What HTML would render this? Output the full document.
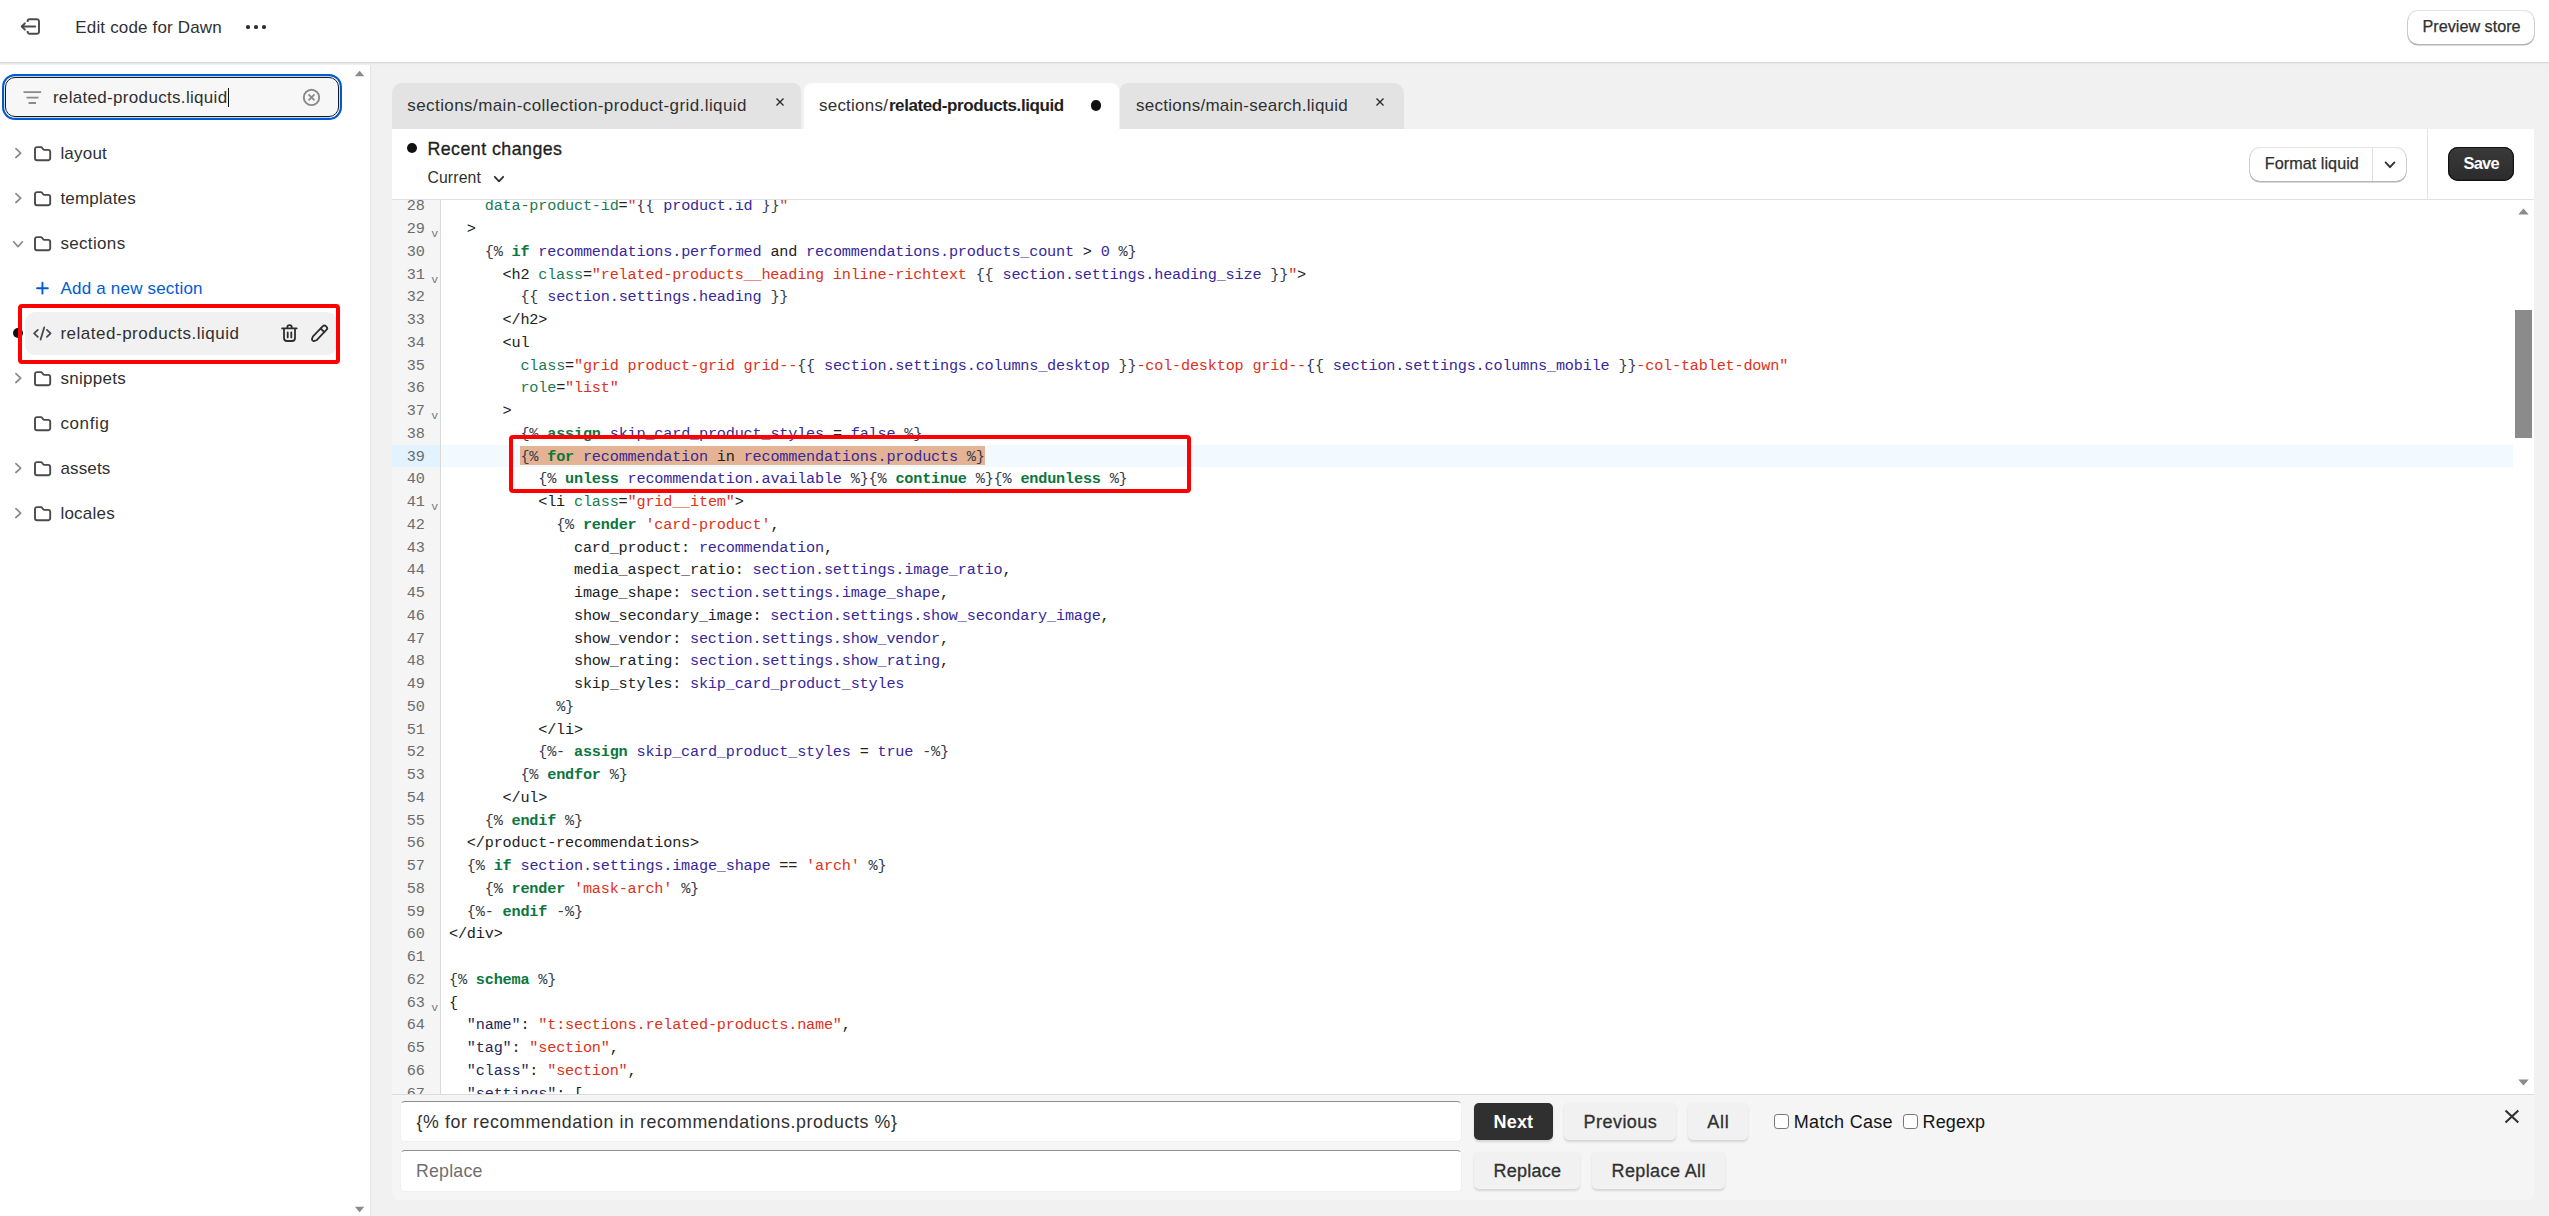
<!DOCTYPE html>
<html><head><meta charset="utf-8"><title>Edit code for Dawn</title>
<style>
html,body{margin:0;padding:0;}
body{width:2549px;height:1216px;overflow:hidden;background:#f1f1f1;position:relative;font-family:"Liberation Sans",sans-serif;}
.ab{position:absolute;box-sizing:border-box;}
.tx{position:absolute;white-space:pre;height:24px;line-height:24px;}
.code{position:absolute;left:392px;top:200px;width:2142px;height:894px;overflow:hidden;background:#fff;}
.ln{position:absolute;left:0;width:2121px;height:22.75px;line-height:22.75px;white-space:pre;font-family:"Liberation Mono",monospace;font-size:15.2px;letter-spacing:-0.188px;color:#202223;}
.ln .n{position:absolute;left:0;width:32.6px;text-align:right;color:#6c6c6c;}
.ln .f{position:absolute;left:39.2px;top:5.2px;font-size:11.6px;color:#7a7a7a;letter-spacing:0;}
.ln .c{position:absolute;left:57px;}
.k{color:#0b763e;font-weight:700;}
.v{color:#38279a;}
.a{color:#1a7a55;}
.s{color:#de3119;}
.d{color:#353b4c;}
.j{color:#1f2a5c;}
</style></head><body>

<div class="ab" style="left:0.00px;top:0.00px;width:2549.00px;height:62.00px;background:#fff;"></div>
<div class="ab" style="left:0.00px;top:62.00px;width:2549.00px;height:1.00px;background:#d9d9d9;"></div>
<div class="ab" style="left:0.00px;top:63.00px;width:2549.00px;height:1.00px;background:#e8e8e8;"></div>
<div class="ab" style="left:0.00px;top:64.00px;width:2549.00px;height:1.00px;background:#efefef;"></div>
<svg class="ab" style="left:18.00px;top:15.00px;" width="24" height="24" viewBox="0 0 24 24"><path d="M9.6 7.1V6.3a2.1 2.1 0 0 1 2.1-2.1h7.2a2.1 2.1 0 0 1 2.1 2.1v10.4a2.1 2.1 0 0 1-2.1 2.1h-7.2a2.1 2.1 0 0 1-2.1-2.1v-.8" fill="none" stroke="#4a4a4a" stroke-width="1.9" stroke-linecap="butt"/><path d="M17.2 11.5H4.2M6.9 8.3L3.7 11.5l3.2 3.2" fill="none" stroke="#4a4a4a" stroke-width="1.9" stroke-linecap="round" stroke-linejoin="round"/></svg>
<div class="tx" style="left:75.30px;top:16.00px;font-size:17.00px;font-weight:400;color:#303030;letter-spacing:0.164px;height:23px;line-height:23px;">Edit code for Dawn</div>
<div class="ab" style="left:246.45px;top:25.45px;width:3.70px;height:3.70px;background:#303030;border-radius:50%;"></div>
<div class="ab" style="left:254.45px;top:25.45px;width:3.70px;height:3.70px;background:#303030;border-radius:50%;"></div>
<div class="ab" style="left:262.45px;top:25.45px;width:3.70px;height:3.70px;background:#303030;border-radius:50%;"></div>
<div class="ab" style="left:2407.50px;top:11.00px;width:126.30px;height:32.50px;background:#fff;border-radius:10px;box-shadow:0 1px 0 0.5px #b5b5b5, 0 0 0 1px #e3e3e3;"></div>
<div class="tx" style="left:2422.50px;top:15.00px;font-size:16.20px;font-weight:400;color:#303030;letter-spacing:0.003px;height:22px;line-height:22px;-webkit-text-stroke:0.25px #303030;">Preview store</div>
<div class="ab" style="left:0.00px;top:65.00px;width:370.00px;height:1151.00px;background:#fff;"></div>
<div class="ab" style="left:370.00px;top:65.00px;width:1.00px;height:1151.00px;background:#e3e3e3;"></div>
<svg class="ab" style="left:354.00px;top:70.00px;" width="11" height="7" viewBox="0 0 11 7"><path d="M0.9 6.2L5.6 0.8L10.3 6.2Z" fill="#8b8b8b"/></svg>
<svg class="ab" style="left:354.00px;top:1205.50px;" width="11" height="7" viewBox="0 0 11 7"><path d="M0.9 0.8L5.6 6.2L10.3 0.8Z" fill="#8b8b8b"/></svg>
<div class="ab" style="left:5.00px;top:77.00px;width:334.00px;height:40.00px;background:#f7f7f7;border:1.3px solid #1a1a1a;border-radius:10px;box-shadow:0 0 0 0.8px #fff,0 0 0 3px #005bd3;"></div>
<svg class="ab" style="left:22.00px;top:88.00px;" width="22" height="18" viewBox="0 0 22 18"><path d="M1.5 4.1H19.2M4.5 9.6H16.5M6.6 15H14" fill="none" stroke="#8a8a8a" stroke-width="1.9" stroke-linecap="butt"/></svg>
<div class="tx" style="left:52.90px;top:86.00px;font-size:17.00px;font-weight:400;color:#303030;letter-spacing:0.319px;height:23px;line-height:23px;">related-products.liquid</div>
<div class="ab" style="left:227.60px;top:87.50px;width:1.20px;height:19.50px;background:#111;"></div>
<svg class="ab" style="left:301.00px;top:87.00px;" width="21" height="21" viewBox="0 0 21 21"><circle cx="10.5" cy="10.4" r="7.7" fill="none" stroke="#8a8a8a" stroke-width="1.9"/><path d="M7.5 7.4l6 6M13.5 7.4l-6 6" stroke="#8a8a8a" stroke-width="1.8" stroke-linecap="butt"/></svg>
<svg class="ab" style="left:13.00px;top:146.40px;" width="11" height="14" viewBox="0 0 11 14"><path d="M2.9 2.7L7.7 7.1L2.9 11.5" fill="none" stroke="#8a8a8a" stroke-width="1.7" stroke-linecap="round" stroke-linejoin="round"/></svg>
<svg class="ab" style="left:32.00px;top:143.90px;" width="22" height="20" viewBox="0 0 22 20"><path d="M3 5.1a2 2 0 0 1 2-2h3.6c.7 0 1.3.3 1.7.9l.9 1.2c.3.5.8.7 1.4.7h3.6a2 2 0 0 1 2 2v6.3a2 2 0 0 1-2 2H5a2 2 0 0 1-2-2z" fill="none" stroke="#4a4a4a" stroke-width="1.9" stroke-linejoin="round"/></svg>
<div class="tx" style="left:60.40px;top:142.00px;font-size:17.00px;font-weight:400;color:#303030;letter-spacing:0.204px;height:23px;line-height:23px;">layout</div>
<svg class="ab" style="left:13.00px;top:191.40px;" width="11" height="14" viewBox="0 0 11 14"><path d="M2.9 2.7L7.7 7.1L2.9 11.5" fill="none" stroke="#8a8a8a" stroke-width="1.7" stroke-linecap="round" stroke-linejoin="round"/></svg>
<svg class="ab" style="left:32.00px;top:188.90px;" width="22" height="20" viewBox="0 0 22 20"><path d="M3 5.1a2 2 0 0 1 2-2h3.6c.7 0 1.3.3 1.7.9l.9 1.2c.3.5.8.7 1.4.7h3.6a2 2 0 0 1 2 2v6.3a2 2 0 0 1-2 2H5a2 2 0 0 1-2-2z" fill="none" stroke="#4a4a4a" stroke-width="1.9" stroke-linejoin="round"/></svg>
<div class="tx" style="left:60.40px;top:187.00px;font-size:17.00px;font-weight:400;color:#303030;letter-spacing:0.211px;height:23px;line-height:23px;">templates</div>
<svg class="ab" style="left:10.50px;top:238.50px;" width="14" height="11" viewBox="0 0 14 11"><path d="M2.6 2.8L7 7.6L11.4 2.8" fill="none" stroke="#8a8a8a" stroke-width="1.7" stroke-linecap="round" stroke-linejoin="round"/></svg>
<svg class="ab" style="left:32.00px;top:233.90px;" width="22" height="20" viewBox="0 0 22 20"><path d="M3 5.1a2 2 0 0 1 2-2h3.6c.7 0 1.3.3 1.7.9l.9 1.2c.3.5.8.7 1.4.7h3.6a2 2 0 0 1 2 2v6.3a2 2 0 0 1-2 2H5a2 2 0 0 1-2-2z" fill="none" stroke="#4a4a4a" stroke-width="1.9" stroke-linejoin="round"/></svg>
<div class="tx" style="left:60.40px;top:232.00px;font-size:17.00px;font-weight:400;color:#303030;letter-spacing:0.341px;height:23px;line-height:23px;">sections</div>
<svg class="ab" style="left:34.00px;top:280.00px;" width="16" height="16" viewBox="0 0 16 16"><path d="M8.45 2.8V13.6M3.05 8.2H13.85" stroke="#005bd3" stroke-width="1.9" stroke-linecap="round"/></svg>
<div class="tx" style="left:60.60px;top:277.00px;font-size:17.00px;font-weight:400;color:#005bd3;letter-spacing:0.187px;height:23px;line-height:23px;">Add a new section</div>
<div class="ab" style="left:12.50px;top:328.20px;width:10.00px;height:10.00px;background:#111;border-radius:50%;"></div>
<div class="ab" style="left:25.00px;top:312.00px;width:312.00px;height:43.00px;background:#f1f1f1;border-radius:10px;"></div>
<svg class="ab" style="left:30px;top:322px;" width="26" height="22" viewBox="30 322 26 22"><path d="M37.8 329.9L34.1 333.4L37.8 336.9M46.9 329.9L50.6 333.4L46.9 336.9M44.2 327.4L40.6 339.6" fill="none" stroke="#4a4a4a" stroke-width="1.8" stroke-linecap="round" stroke-linejoin="round"/></svg>
<div class="tx" style="left:60.40px;top:322.00px;font-size:17.00px;font-weight:400;color:#303030;letter-spacing:0.515px;height:23px;line-height:23px;">related-products.liquid</div>
<svg class="ab" style="left:279px;top:322px;" width="21" height="21" viewBox="279 322 21 21"><path d="M282.1 328.4H296.7M287.3 328.2V327.4a2.25 2.25 0 0 1 4.5 0V328.2M284 328.8V338a3 3 0 0 0 3 3h5a3 3 0 0 0 3-3V328.8M287.7 332.3V337.4M291.3 332.3V337.4" fill="none" stroke="#2e2e2e" stroke-width="1.8" stroke-linecap="round" stroke-linejoin="round"/></svg>
<svg class="ab" style="left:308px;top:322px;" width="23" height="23" viewBox="308 322 23 23"><g transform="translate(319.6 333.3) rotate(-46)" fill="none" stroke="#2e2e2e" stroke-width="1.8" stroke-linecap="round" stroke-linejoin="round"><path d="M-7.2 -2.55H7.4A2.1 2.1 0 0 1 9.5 -.45V.45A2.1 2.1 0 0 1 7.4 2.55H-7.2L-9.7 1.3Q-10.6 0 -9.7 -1.3Z"/><path d="M4.2 -2.55V2.55"/></g></svg>
<svg class="ab" style="left:13.00px;top:371.40px;" width="11" height="14" viewBox="0 0 11 14"><path d="M2.9 2.7L7.7 7.1L2.9 11.5" fill="none" stroke="#8a8a8a" stroke-width="1.7" stroke-linecap="round" stroke-linejoin="round"/></svg>
<svg class="ab" style="left:32.00px;top:368.90px;" width="22" height="20" viewBox="0 0 22 20"><path d="M3 5.1a2 2 0 0 1 2-2h3.6c.7 0 1.3.3 1.7.9l.9 1.2c.3.5.8.7 1.4.7h3.6a2 2 0 0 1 2 2v6.3a2 2 0 0 1-2 2H5a2 2 0 0 1-2-2z" fill="none" stroke="#4a4a4a" stroke-width="1.9" stroke-linejoin="round"/></svg>
<div class="tx" style="left:60.40px;top:367.00px;font-size:17.00px;font-weight:400;color:#303030;letter-spacing:0.284px;height:23px;line-height:23px;">snippets</div>
<svg class="ab" style="left:32.00px;top:413.90px;" width="22" height="20" viewBox="0 0 22 20"><path d="M3 5.1a2 2 0 0 1 2-2h3.6c.7 0 1.3.3 1.7.9l.9 1.2c.3.5.8.7 1.4.7h3.6a2 2 0 0 1 2 2v6.3a2 2 0 0 1-2 2H5a2 2 0 0 1-2-2z" fill="none" stroke="#4a4a4a" stroke-width="1.9" stroke-linejoin="round"/></svg>
<div class="tx" style="left:60.40px;top:412.00px;font-size:17.00px;font-weight:400;color:#303030;letter-spacing:0.621px;height:23px;line-height:23px;">config</div>
<svg class="ab" style="left:13.00px;top:461.40px;" width="11" height="14" viewBox="0 0 11 14"><path d="M2.9 2.7L7.7 7.1L2.9 11.5" fill="none" stroke="#8a8a8a" stroke-width="1.7" stroke-linecap="round" stroke-linejoin="round"/></svg>
<svg class="ab" style="left:32.00px;top:458.90px;" width="22" height="20" viewBox="0 0 22 20"><path d="M3 5.1a2 2 0 0 1 2-2h3.6c.7 0 1.3.3 1.7.9l.9 1.2c.3.5.8.7 1.4.7h3.6a2 2 0 0 1 2 2v6.3a2 2 0 0 1-2 2H5a2 2 0 0 1-2-2z" fill="none" stroke="#4a4a4a" stroke-width="1.9" stroke-linejoin="round"/></svg>
<div class="tx" style="left:60.40px;top:457.00px;font-size:17.00px;font-weight:400;color:#303030;letter-spacing:0.160px;height:23px;line-height:23px;">assets</div>
<svg class="ab" style="left:13.00px;top:506.40px;" width="11" height="14" viewBox="0 0 11 14"><path d="M2.9 2.7L7.7 7.1L2.9 11.5" fill="none" stroke="#8a8a8a" stroke-width="1.7" stroke-linecap="round" stroke-linejoin="round"/></svg>
<svg class="ab" style="left:32.00px;top:503.90px;" width="22" height="20" viewBox="0 0 22 20"><path d="M3 5.1a2 2 0 0 1 2-2h3.6c.7 0 1.3.3 1.7.9l.9 1.2c.3.5.8.7 1.4.7h3.6a2 2 0 0 1 2 2v6.3a2 2 0 0 1-2 2H5a2 2 0 0 1-2-2z" fill="none" stroke="#4a4a4a" stroke-width="1.9" stroke-linejoin="round"/></svg>
<div class="tx" style="left:60.40px;top:502.00px;font-size:17.00px;font-weight:400;color:#303030;letter-spacing:0.240px;height:23px;line-height:23px;">locales</div>
<div class="ab" style="left:18.10px;top:304.00px;width:322.20px;height:60.00px;border:4.1px solid #ff0000;border-radius:4px;"></div>
<div class="ab" style="left:391.50px;top:82.80px;width:409.80px;height:46.20px;background:#e3e3e3;border-radius:10px 8px 0 0;"></div>
<div class="ab" style="left:1120.30px;top:82.80px;width:283.50px;height:46.20px;background:#e3e3e3;border-radius:8px 10px 0 0;"></div>
<div class="ab" style="left:803.80px;top:82.80px;width:315.40px;height:46.20px;background:#fff;border-radius:8px 8px 0 0;"></div>
<div class="tx" style="left:407.30px;top:94.00px;font-size:17.00px;font-weight:400;color:#303030;letter-spacing:0.417px;height:23px;line-height:23px;">sections/main-collection-product-grid.liquid</div>
<div class="tx" style="left:819.00px;top:94.00px;font-size:17.00px;font-weight:400;color:#303030;letter-spacing:0.223px;height:23px;line-height:23px;">sections/</div>
<div class="tx" style="left:888.90px;top:94.00px;font-size:17.00px;font-weight:700;color:#1f1f1f;letter-spacing:-0.404px;height:23px;line-height:23px;">related-products.liquid</div>
<div class="tx" style="left:1136.00px;top:94.00px;font-size:17.00px;font-weight:400;color:#303030;letter-spacing:0.261px;height:23px;line-height:23px;">sections/main-search.liquid</div>
<svg class="ab" style="left:774.60px;top:96.50px;" width="10" height="10" viewBox="0 0 10 10"><path d="M1.5 1.5l7 7M8.5 1.5l-7 7" stroke="#2a2a2a" stroke-width="1.35" stroke-linecap="butt"/></svg>
<svg class="ab" style="left:1375.40px;top:96.60px;" width="10" height="10" viewBox="0 0 10 10"><path d="M1.5 1.5l7 7M8.5 1.5l-7 7" stroke="#2a2a2a" stroke-width="1.35" stroke-linecap="butt"/></svg>
<div class="ab" style="left:1090.60px;top:100.20px;width:10.60px;height:10.60px;background:#111;border-radius:50%;"></div>
<div class="ab" style="left:392.00px;top:128.50px;width:2142.00px;height:72.00px;background:#fff;"></div>
<div class="ab" style="left:392.00px;top:199.30px;width:2142.00px;height:1.20px;background:#e1e1e1;"></div>
<div class="ab" style="left:406.80px;top:142.70px;width:10.30px;height:10.30px;background:#111;border-radius:50%;"></div>
<div class="tx" style="left:427.40px;top:137.00px;font-size:17.80px;font-weight:400;color:#1f1f1f;letter-spacing:0.470px;height:24px;line-height:24px;-webkit-text-stroke:0.32px #1f1f1f;">Recent changes</div>
<div class="tx" style="left:427.40px;top:167.00px;font-size:15.80px;font-weight:400;color:#303030;letter-spacing:0.130px;height:21px;line-height:21px;">Current</div>
<svg class="ab" style="left:491.70px;top:172.90px;" width="14" height="12" viewBox="0 0 14 12"><path d="M2.8 3.8L7 8.4L11.2 3.8" fill="none" stroke="#303030" stroke-width="1.8" stroke-linecap="round" stroke-linejoin="round"/></svg>
<div class="ab" style="left:2427.00px;top:128.50px;width:1.00px;height:71.00px;background:#e3e3e3;"></div>
<div class="ab" style="left:2249.50px;top:148.00px;width:156.40px;height:32.80px;background:#fff;border-radius:10px;box-shadow:0 1px 0 0.5px #b5b5b5, 0 0 0 1px #e3e3e3;"></div>
<div class="ab" style="left:2372.00px;top:148.00px;width:1.00px;height:33.00px;background:#dedede;"></div>
<div class="tx" style="left:2264.80px;top:152.00px;font-size:16.20px;font-weight:400;color:#303030;letter-spacing:0.041px;height:22px;line-height:22px;-webkit-text-stroke:0.25px #303030;">Format liquid</div>
<svg class="ab" style="left:2382.50px;top:158.50px;" width="14" height="12" viewBox="0 0 14 12"><path d="M2.6 3.4L7 8.2L11.4 3.4" fill="none" stroke="#303030" stroke-width="1.9" stroke-linecap="round" stroke-linejoin="round"/></svg>
<div class="ab" style="left:2448.20px;top:147.30px;width:65.80px;height:34.00px;background:linear-gradient(#3a3a3a,#2b2b2b);border-radius:10px;box-shadow:inset 0 0 0 1.2px #111, inset 0 2px 0 0 #4a4a4a;"></div>
<div class="tx" style="left:2463.40px;top:152.00px;font-size:16.40px;font-weight:700;color:#fff;letter-spacing:-0.670px;height:22px;line-height:22px;">Save</div>
<div class="code">
<div class="ab" style="left:0;top:0;width:49px;height:894px;background:#f5f5f5;border-right:1px solid #d9d9d9;"></div>
<div class="ab" style="left:0;top:245.10px;width:48px;height:21.9px;background:#e2f2ff;"></div>
<div class="ab" style="left:49px;top:245.10px;width:2072px;height:21.9px;background:#f2f9ff;"></div>
<div class="ab" style="left:127.9px;top:245.8px;width:465px;height:19.3px;background:#e4b394;"></div>
<div class="ln" style="top:-4.625px"><span class="n">28</span><span class="c">    <span class="a">data-product-id</span>=<span class="s">"</span><span class="d">{{</span> <span class="v">product.id</span> <span class="d">}}</span><span class="s">"</span></span></div>
<div class="ln" style="top:18.125px"><span class="n">29</span><span class="f">v</span><span class="c">  &gt;</span></div>
<div class="ln" style="top:40.875px"><span class="n">30</span><span class="c">    <span class="d">{%</span> <span class="k">if</span> <span class="v">recommendations.performed</span> and <span class="v">recommendations.products_count</span> &gt; <span class="v">0</span> <span class="d">%}</span></span></div>
<div class="ln" style="top:63.625px"><span class="n">31</span><span class="f">v</span><span class="c">      &lt;h2 <span class="a">class</span>=<span class="s">"related-products__heading inline-richtext </span><span class="d">{{</span> <span class="v">section.settings.heading_size</span> <span class="d">}}</span><span class="s">"</span>&gt;</span></div>
<div class="ln" style="top:86.375px"><span class="n">32</span><span class="c">        <span class="d">{{</span> <span class="v">section.settings.heading</span> <span class="d">}}</span></span></div>
<div class="ln" style="top:109.125px"><span class="n">33</span><span class="c">      &lt;/h2&gt;</span></div>
<div class="ln" style="top:131.875px"><span class="n">34</span><span class="c">      &lt;ul</span></div>
<div class="ln" style="top:154.625px"><span class="n">35</span><span class="c">        <span class="a">class</span>=<span class="s">"grid product-grid grid--</span><span class="d">{{</span> <span class="v">section.settings.columns_desktop</span> <span class="d">}}</span><span class="s">-col-desktop grid--</span><span class="d">{{</span> <span class="v">section.settings.columns_mobile</span> <span class="d">}}</span><span class="s">-col-tablet-down"</span></span></div>
<div class="ln" style="top:177.375px"><span class="n">36</span><span class="c">        <span class="a">role</span>=<span class="s">"list"</span></span></div>
<div class="ln" style="top:200.125px"><span class="n">37</span><span class="f">v</span><span class="c">      &gt;</span></div>
<div class="ln" style="top:222.875px"><span class="n">38</span><span class="c">        <span class="d">{%</span> <span class="k">assign</span> <span class="v">skip_card_product_styles</span> = <span class="v">false</span> <span class="d">%}</span></span></div>
<div class="ln" style="top:245.625px"><span class="n">39</span><span class="c">        <span><span class="d">{%</span> <span class="k">for</span> <span class="v">recommendation</span> in <span class="v">recommendations.products</span> <span class="d">%}</span></span></span></div>
<div class="ln" style="top:268.375px"><span class="n">40</span><span class="c">          <span class="d">{%</span> <span class="k">unless</span> <span class="v">recommendation.available</span> <span class="d">%}{%</span> <span class="k">continue</span> <span class="d">%}{%</span> <span class="k">endunless</span> <span class="d">%}</span></span></div>
<div class="ln" style="top:291.125px"><span class="n">41</span><span class="f">v</span><span class="c">          &lt;li <span class="a">class</span>=<span class="s">"grid__item"</span>&gt;</span></div>
<div class="ln" style="top:313.875px"><span class="n">42</span><span class="c">            <span class="d">{%</span> <span class="k">render</span> <span class="s">'card-product'</span>,</span></div>
<div class="ln" style="top:336.625px"><span class="n">43</span><span class="c">              card_product: <span class="v">recommendation</span>,</span></div>
<div class="ln" style="top:359.375px"><span class="n">44</span><span class="c">              media_aspect_ratio: <span class="v">section.settings.image_ratio</span>,</span></div>
<div class="ln" style="top:382.125px"><span class="n">45</span><span class="c">              image_shape: <span class="v">section.settings.image_shape</span>,</span></div>
<div class="ln" style="top:404.875px"><span class="n">46</span><span class="c">              show_secondary_image: <span class="v">section.settings.show_secondary_image</span>,</span></div>
<div class="ln" style="top:427.625px"><span class="n">47</span><span class="c">              show_vendor: <span class="v">section.settings.show_vendor</span>,</span></div>
<div class="ln" style="top:450.375px"><span class="n">48</span><span class="c">              show_rating: <span class="v">section.settings.show_rating</span>,</span></div>
<div class="ln" style="top:473.125px"><span class="n">49</span><span class="c">              skip_styles: <span class="v">skip_card_product_styles</span></span></div>
<div class="ln" style="top:495.875px"><span class="n">50</span><span class="c">            <span class="d">%}</span></span></div>
<div class="ln" style="top:518.625px"><span class="n">51</span><span class="c">          &lt;/li&gt;</span></div>
<div class="ln" style="top:541.375px"><span class="n">52</span><span class="c">          <span class="d">{%-</span> <span class="k">assign</span> <span class="v">skip_card_product_styles</span> = <span class="v">true</span> <span class="d">-%}</span></span></div>
<div class="ln" style="top:564.125px"><span class="n">53</span><span class="c">        <span class="d">{%</span> <span class="k">endfor</span> <span class="d">%}</span></span></div>
<div class="ln" style="top:586.875px"><span class="n">54</span><span class="c">      &lt;/ul&gt;</span></div>
<div class="ln" style="top:609.625px"><span class="n">55</span><span class="c">    <span class="d">{%</span> <span class="k">endif</span> <span class="d">%}</span></span></div>
<div class="ln" style="top:632.375px"><span class="n">56</span><span class="c">  &lt;/product-recommendations&gt;</span></div>
<div class="ln" style="top:655.125px"><span class="n">57</span><span class="c">  <span class="d">{%</span> <span class="k">if</span> <span class="v">section.settings.image_shape</span> == <span class="s">'arch'</span> <span class="d">%}</span></span></div>
<div class="ln" style="top:677.875px"><span class="n">58</span><span class="c">    <span class="d">{%</span> <span class="k">render</span> <span class="s">'mask-arch'</span> <span class="d">%}</span></span></div>
<div class="ln" style="top:700.625px"><span class="n">59</span><span class="c">  <span class="d">{%-</span> <span class="k">endif</span> <span class="d">-%}</span></span></div>
<div class="ln" style="top:723.375px"><span class="n">60</span><span class="c">&lt;/div&gt;</span></div>
<div class="ln" style="top:746.125px"><span class="n">61</span><span class="c"></span></div>
<div class="ln" style="top:768.875px"><span class="n">62</span><span class="c"><span class="d">{%</span> <span class="k">schema</span> <span class="d">%}</span></span></div>
<div class="ln" style="top:791.625px"><span class="n">63</span><span class="f">v</span><span class="c">{</span></div>
<div class="ln" style="top:814.375px"><span class="n">64</span><span class="c">  <span class="j">"name"</span>: <span class="s">"t:sections.related-products.name"</span>,</span></div>
<div class="ln" style="top:837.125px"><span class="n">65</span><span class="c">  <span class="j">"tag"</span>: <span class="s">"section"</span>,</span></div>
<div class="ln" style="top:859.875px"><span class="n">66</span><span class="c">  <span class="j">"class"</span>: <span class="s">"section"</span>,</span></div>
<div class="ln" style="top:882.625px"><span class="n">67</span><span class="c">  <span class="j">"settings"</span>: [</span></div>
<div class="ab" style="left:2121px;top:0;width:21px;height:894px;background:#fff;"></div>
<div class="ab" style="left:2123px;top:110px;width:17px;height:128px;background:#8b8b8b;"></div>
<svg class="ab" style="left:2125.5px;top:8px;" width="11" height="7" viewBox="0 0 11 7"><path d="M0.3 6.5L5.5 0.6L10.7 6.5Z" fill="#8b8b8b"/></svg>
<svg class="ab" style="left:2125.5px;top:878.5px;" width="11" height="7" viewBox="0 0 11 7"><path d="M0.3 0.5L5.5 6.4L10.7 0.5Z" fill="#8b8b8b"/></svg>
</div>
<div class="ab" style="left:509.00px;top:435.20px;width:682.30px;height:57.70px;border:4.2px solid #ff0000;border-radius:4px;"></div>
<div class="ab" style="left:392.00px;top:1094.00px;width:2142.00px;height:106.00px;background:#f5f5f5;border-top:1px solid #dcdcdc;border-radius:0 0 8px 8px;"></div>
<div class="ab" style="left:399.80px;top:1101.10px;width:1062.40px;height:41.30px;background:#fff;border-radius:5px;border:1px solid #f0f0f0;border-top:1.3px solid #8e8e8e;"></div>
<div class="ab" style="left:399.80px;top:1150.00px;width:1062.40px;height:41.50px;background:#fff;border-radius:5px;border:1px solid #f0f0f0;border-top:1.3px solid #8e8e8e;"></div>
<div class="tx" style="left:416.40px;top:1110.00px;font-size:17.80px;font-weight:400;color:#303030;letter-spacing:0.604px;height:24px;line-height:24px;">{% for recommendation in recommendations.products %}</div>
<div class="tx" style="left:416.00px;top:1159.00px;font-size:17.80px;font-weight:400;color:#6f6f6f;letter-spacing:0.193px;height:24px;line-height:24px;">Replace</div>
<div class="ab" style="left:1474.00px;top:1103.00px;width:79.00px;height:37.00px;background:#303030;border-radius:5px;box-shadow:0 1.6px 2.2px 0 rgba(0,0,0,0.13);"></div>
<div class="tx" style="left:1493.60px;top:1110.00px;font-size:18.00px;font-weight:700;color:#fff;letter-spacing:0.146px;height:24px;line-height:24px;">Next</div>
<div class="ab" style="left:1563.80px;top:1103.00px;width:112.40px;height:36.50px;background:#f1f1f1;border-radius:5px;box-shadow:0 1.6px 2.2px 0 rgba(0,0,0,0.13);"></div>
<div class="tx" style="left:1583.60px;top:1110.00px;font-size:18.00px;font-weight:400;color:#303030;letter-spacing:0.446px;height:24px;line-height:24px;-webkit-text-stroke:0.3px #303030;">Previous</div>
<div class="ab" style="left:1687.60px;top:1103.00px;width:60.60px;height:36.50px;background:#f1f1f1;border-radius:5px;box-shadow:0 1.6px 2.2px 0 rgba(0,0,0,0.13);"></div>
<div class="tx" style="left:1707.20px;top:1110.00px;font-size:18.00px;font-weight:400;color:#303030;letter-spacing:0.728px;height:24px;line-height:24px;-webkit-text-stroke:0.3px #303030;">All</div>
<div class="ab" style="left:1774.40px;top:1113.80px;width:15.00px;height:15.00px;background:#fff;border:1.3px solid #767676;border-radius:3.2px;"></div>
<div class="tx" style="left:1793.80px;top:1110.00px;font-size:18.00px;font-weight:400;color:#141414;letter-spacing:0.305px;height:24px;line-height:24px;">Match Case</div>
<div class="ab" style="left:1903.40px;top:1113.80px;width:15.00px;height:15.00px;background:#fff;border:1.3px solid #767676;border-radius:3.2px;"></div>
<div class="tx" style="left:1922.60px;top:1110.00px;font-size:18.00px;font-weight:400;color:#141414;letter-spacing:0.092px;height:24px;line-height:24px;">Regexp</div>
<div class="ab" style="left:1474.00px;top:1152.20px;width:106.00px;height:36.50px;background:#f1f1f1;border-radius:5px;box-shadow:0 1.6px 2.2px 0 rgba(0,0,0,0.13);"></div>
<div class="tx" style="left:1493.60px;top:1159.00px;font-size:18.00px;font-weight:400;color:#303030;letter-spacing:0.222px;height:24px;line-height:24px;-webkit-text-stroke:0.3px #303030;">Replace</div>
<div class="ab" style="left:1592.00px;top:1152.20px;width:132.60px;height:36.50px;background:#f1f1f1;border-radius:5px;box-shadow:0 1.6px 2.2px 0 rgba(0,0,0,0.13);"></div>
<div class="tx" style="left:1611.60px;top:1159.00px;font-size:18.00px;font-weight:400;color:#303030;letter-spacing:0.376px;height:24px;line-height:24px;-webkit-text-stroke:0.3px #303030;">Replace All</div>
<svg class="ab" style="left:2503.00px;top:1108.00px;" width="18" height="18" viewBox="0 0 18 18"><path d="M2.5 2.6L15.3 14.6M15.3 2.6L2.5 14.6" stroke="#303030" stroke-width="2.1" stroke-linecap="butt"/></svg>
</body></html>
